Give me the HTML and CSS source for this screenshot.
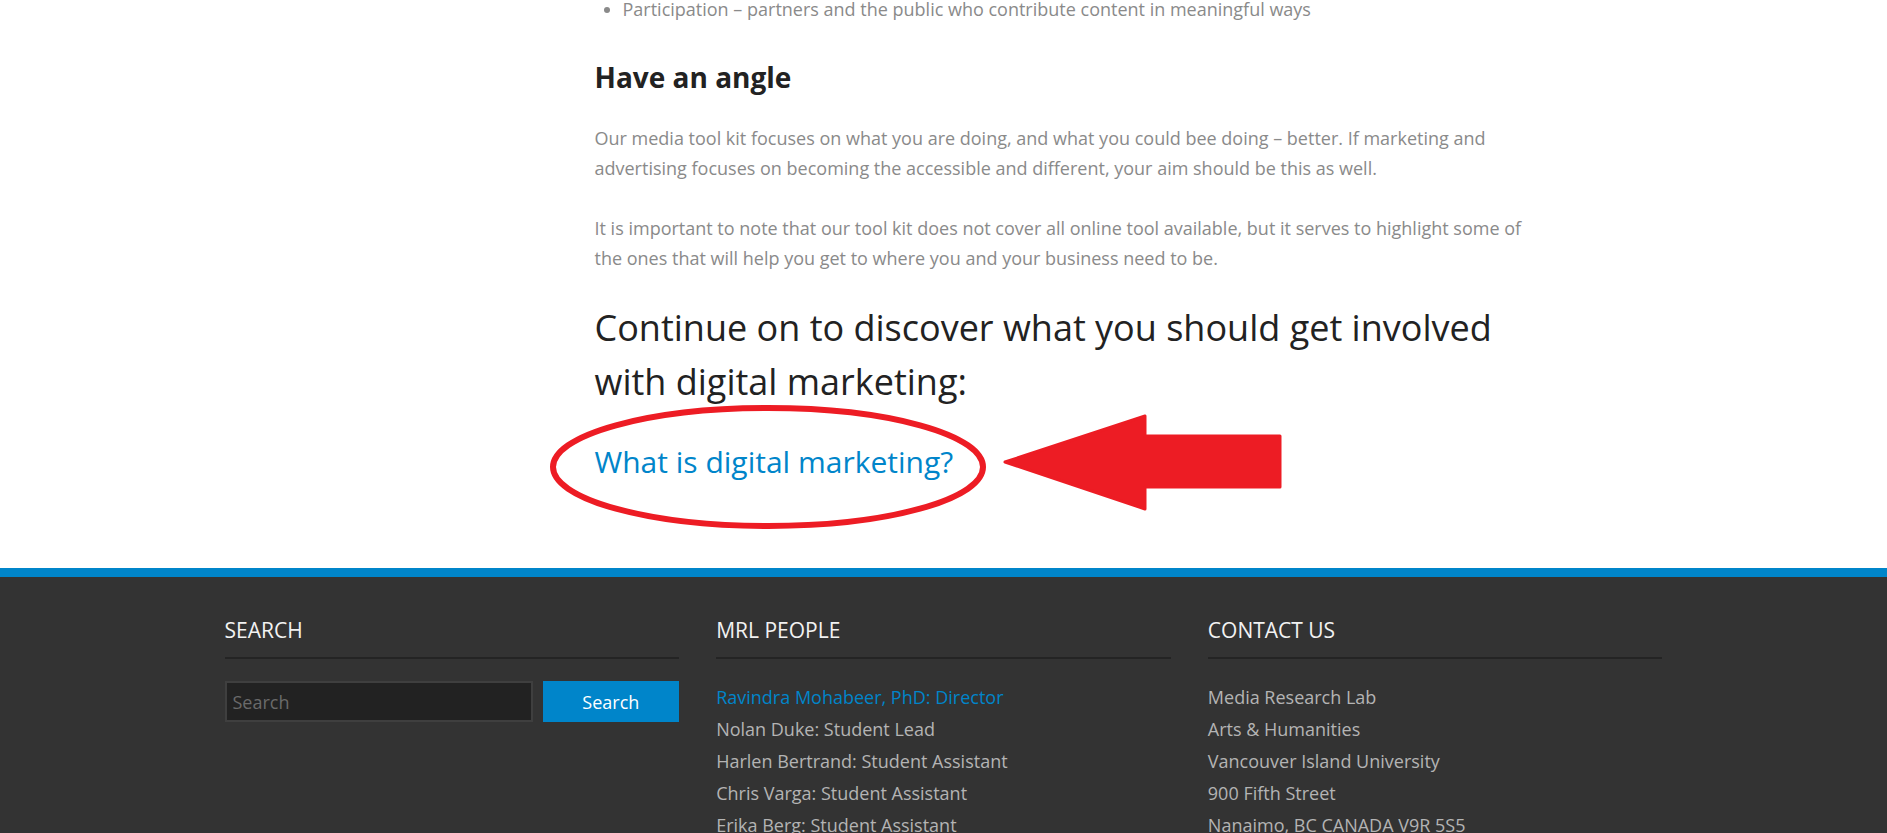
FILE: index.html
```html
<!DOCTYPE html>
<html lang="en">
<head>
<meta charset="utf-8">
<title>Media Tool Kit</title>
<link rel="stylesheet" href="styles.css">
</head>
<body>
<main class="page">
  <article class="entry">
    <ul class="points">
      <li>Participation – partners and the public who contribute content in meaningful ways</li>
    </ul>
    <h2 class="angle">Have an angle</h2>
    <p class="copy">Our media tool kit focuses on what you are doing, and what you could bee doing – better. If marketing and advertising focuses on becoming the accessible and different, your aim should be this as well.</p>
    <p class="copy">It is important to note that our tool kit does not cover all online tool available, but it serves to highlight some of the ones that will help you get to where you and your business need to be.</p>
    <h3 class="continue">Continue on to discover what you should get involved with digital marketing:</h3>
    <div class="next">
      <a href="#" class="next-link">What is digital marketing?</a>
      <svg class="ring" width="440" height="128" viewBox="0 0 440 128" aria-hidden="true"><ellipse cx="220" cy="64" rx="215" ry="59" fill="none" stroke="#ed1c24" stroke-width="6"/></svg>
      <svg class="arrow" width="285" height="103" viewBox="0 0 285 103" aria-hidden="true"><polygon points="5,51 145,5 145,25 280,25 280,76 145,76 145,98" fill="#ed1c24" stroke="#ed1c24" stroke-width="3" stroke-linejoin="round"/></svg>
    </div>
  </article>
</main>
<footer class="site-footer">
  <div class="footer-inner">
    <section class="widget">
      <h4 class="widget-title">SEARCH</h4>
      <form class="search-form">
        <input class="search-field" type="text" placeholder="Search">
        <button class="search-btn" type="button">Search</button>
      </form>
    </section>
    <section class="widget">
      <h4 class="widget-title">MRL PEOPLE</h4>
      <ul class="widget-list">
        <li><a href="#">Ravindra Mohabeer, PhD: Director</a></li>
        <li>Nolan Duke: Student Lead</li>
        <li>Harlen Bertrand: Student Assistant</li>
        <li>Chris Varga: Student Assistant</li>
        <li>Erika Berg: Student Assistant</li>
      </ul>
    </section>
    <section class="widget">
      <h4 class="widget-title">CONTACT US</h4>
      <ul class="widget-list">
        <li>Media Research Lab</li>
        <li>Arts &amp; Humanities</li>
        <li>Vancouver Island University</li>
        <li>900 Fifth Street</li>
        <li>Nanaimo, BC CANADA V9R 5S5</li>
      </ul>
    </section>
  </div>
</footer>
</body>
</html>
```
FILE: styles.css
```css
* { box-sizing: border-box; }
html, body { margin: 0; padding: 0; }
body {
  font-family: "Open Sans", "Liberation Sans", sans-serif;
  font-size: 18px;
  line-height: 30px;
  color: #8a8a8a;
  background: #ffffff;
  overflow: hidden;
}
.page {
  width: 1438px;
  margin: 0 auto;
  padding-left: 370px;
}
.entry {
  width: 940px;
}
.points {
  margin: -6px 0 0 0;
  padding-left: 28px;
}
.points li::marker { color: #8a8a8a; }
.angle {
  font-size: 28px;
  font-weight: 700;
  line-height: 34px;
  color: #222222;
  margin: 36px 0 29px;
}
.copy { margin: 0 0 30px; }
.continue {
  font-size: 36px;
  font-weight: 400;
  line-height: 54px;
  color: #222222;
  margin: -2px 0 30px;
}
.next {
  position: relative;
  font-size: 30px;
  line-height: 45px;
  height: 129px;
}
.next-link { color: #0085ca; text-decoration: none; }
.ring { position: absolute; left: -47px; top: -36px; }
.arrow { position: absolute; left: 405px; top: -28px; }

.site-footer {
  background: #333333;
  border-top: 9px solid #0085ca;
  min-height: 300px;
}
.footer-inner {
  width: 1438px;
  margin: 0 auto;
  padding-top: 41px;
  display: grid;
  grid-template-columns: repeat(3, 1fr);
  column-gap: 37px;
}
.widget-title {
  margin: 0;
  font-size: 21px;
  font-weight: 400;
  line-height: 24px;
  color: #f2f2f2;
  padding-bottom: 15px;
  border-bottom: 2px solid #242424;
}
.search-form {
  display: flex;
  gap: 10px;
  margin-top: 22px;
}
.search-field {
  width: 308px;
  height: 41px;
  background: #222222;
  border: 2px solid #3f3f3f;
  color: #ccc;
  font-family: "Open Sans", "Liberation Sans", sans-serif;
  font-size: 18px;
  padding: 0 6px;
  outline: none;
}
.search-field::placeholder { color: #6a6a6a; }
.search-btn {
  flex: 1;
  height: 41px;
  border: 0;
  background: #0085ca;
  color: #ffffff;
  font-family: "Open Sans", "Liberation Sans", sans-serif;
  font-size: 18px;
}
.widget-list {
  list-style: none;
  margin: 22px 0 0;
  padding: 0;
  font-size: 18px;
  line-height: 32px;
  color: #b4b4b4;
}
.widget-list a { color: #0085ca; text-decoration: none; }
```
